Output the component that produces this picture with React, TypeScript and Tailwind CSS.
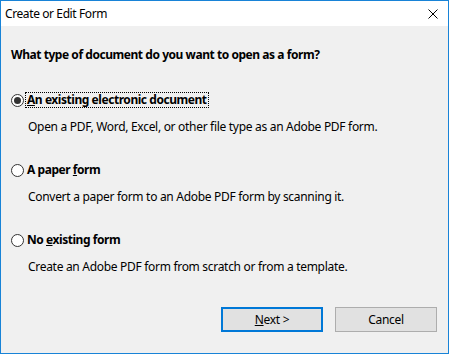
function Radio({ checked }: { checked?: boolean }) {
  return (
    <span className="flex h-[13px] w-[13px] shrink-0 items-center justify-center rounded-full border border-[#333333] bg-white">
      {checked && <span className="h-[7px] w-[7px] rounded-full bg-[#333333]" />}
    </span>
  )
}

function Option({
  checked,
  focused,
  label,
  desc,
  className,
}: {
  checked?: boolean
  focused?: boolean
  label: React.ReactNode
  desc: string
  className?: string
}) {
  return (
    <div className={className}>
      <div className="flex h-4 items-center">
        <Radio checked={checked} />
        <span
          className={
            'ml-[2px] px-[1px] font-bold leading-[14px] tracking-[-0.45px] ' +
            (focused ? 'outline outline-1 outline-dotted outline-black' : '')
          }
        >
          {label}
        </span>
      </div>
      <p className="ml-[17px] mt-[11px] leading-4 tracking-[-0.3px]">{desc}</p>
    </div>
  )
}

export default function App() {
  return (
    <div className="flex h-[354px] w-[449px] flex-col border border-[#1883d7] bg-[#f0f0f0] font-['Noto_Sans',sans-serif] text-[12px] text-black">
      {/* Title bar */}
      <div className="flex h-[25px] shrink-0 items-center justify-between bg-white pl-[4px] pr-[10px]">
        <span className="leading-4 tracking-[-0.4px]">Create or Edit Form</span>
        <svg width="10" height="10" viewBox="0 0 10 10" className="mt-[1px]">
          <path d="M0.5 0.5 L9.5 9.5 M9.5 0.5 L0.5 9.5" stroke="#000" strokeWidth="1" fill="none" />
        </svg>
      </div>

      <div className="flex flex-1 flex-col px-[10px]">
        <p className="mt-[21px] font-bold leading-4 tracking-[-0.45px]">
          What type of document do you want to open as a form?
        </p>

        <Option
          className="mt-[29px]"
          checked
          focused
          label={
            <>
              <u>A</u>n existing electronic document
            </>
          }
          desc="Open a PDF, Word, Excel, or other file type as an Adobe PDF form."
        />
        <Option
          className="mt-[27px]"
          label={
            <>
              A paper <u>f</u>orm
            </>
          }
          desc="Convert a paper form to an Adobe PDF form by scanning it."
        />
        <Option
          className="mt-[27px]"
          label={
            <>
              No <u>e</u>xisting form
            </>
          }
          desc="Create an Adobe PDF form from scratch or from a template."
        />

        <div className="mt-[32px] flex justify-end gap-[12px] pr-[1px]">
          <button className="h-[25px] w-[102px] border-2 border-[#0078d7] bg-[#e1e1e1] leading-4 tracking-[-0.3px]">
            <u>N</u>ext &gt;
          </button>
          <button className="h-[25px] w-[102px] border border-[#adadad] bg-[#e1e1e1] leading-4 tracking-[-0.3px]">
            Cancel
          </button>
        </div>
      </div>
    </div>
  )
}
